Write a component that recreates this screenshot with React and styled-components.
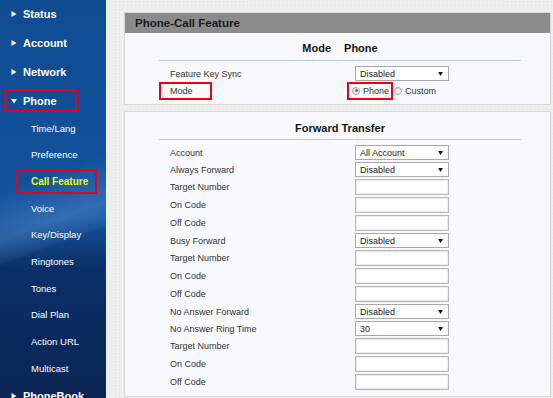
import React from 'react';
import styled, { createGlobalStyle } from 'styled-components';

const GlobalStyle = createGlobalStyle`
    html, body {
        margin: 0;
        padding: 0;
        width: 553px;
        height: 398px;
        overflow: hidden;
        background: #efefef;
        font-family: 'Liberation Sans', Arial, sans-serif;
    }
`;

const menu = [
    { label: 'Status', top: true },
    { label: 'Account', top: true },
    { label: 'Network', top: true },
    { label: 'Phone', top: true, open: true, marked: true },
    { label: 'Time/Lang' },
    { label: 'Preference' },
    { label: 'Call Feature', active: true, marked: true },
    { label: 'Voice' },
    { label: 'Key/Display' },
    { label: 'Ringtones' },
    { label: 'Tones' },
    { label: 'Dial Plan' },
    { label: 'Action URL' },
    { label: 'Multicast' },
    { label: 'PhoneBook', top: true },
];

const forwardRows = [
    { label: 'Account', select: 'All Account' },
    { label: 'Always Forward', select: 'Disabled' },
    { label: 'Target Number' },
    { label: 'On Code' },
    { label: 'Off Code' },
    { label: 'Busy Forward', select: 'Disabled' },
    { label: 'Target Number' },
    { label: 'On Code' },
    { label: 'Off Code' },
    { label: 'No Answer Forward', select: 'Disabled' },
    { label: 'No Answer Ring Time', select: '30' },
    { label: 'Target Number' },
    { label: 'On Code' },
    { label: 'Off Code' },
];

function Arrow({ open }) {
    return (
        <ArrowIcon viewBox="0 0 6 6">
            {open ? <path d="M0 1 L6 1 L3 5.5 Z" /> : <path d="M0.5 0 L5.5 3 L0.5 6 Z" />}
        </ArrowIcon>
    );
}

function Select({ value }) {
    return (
        <SelectBox>
            <span>{value}</span>
            <Caret viewBox="0 0 6 5">
                <path d="M0 0 L6 0 L3 5 Z" />
            </Caret>
        </SelectBox>
    );
}

function App() {
    return (
        <Page>
            <GlobalStyle />
            <Sidebar>
                <Nav>
                    {menu.map((item, i) =>
                        item.top ? (
                            <TopItem key={i}>
                                <TopBox $marked={item.marked}>
                                    <Arrow open={item.open} />
                                    {item.label}
                                </TopBox>
                            </TopItem>
                        ) : (
                            <SubItem key={i}>
                                <SubBox $marked={item.marked} $active={item.active}>
                                    {item.label}
                                </SubBox>
                            </SubItem>
                        )
                    )}
                </Nav>
            </Sidebar>
            <Main>
                <Panel>
                    <PanelHeader>Phone-Call Feature</PanelHeader>
                    <Section>
                        <SectionTitle>
                            <span>Mode</span>
                            <span>Phone</span>
                        </SectionTitle>
                        <Rows>
                            <Row>
                                <Label>Feature Key Sync</Label>
                                <Select value="Disabled" />
                            </Row>
                            <Row>
                                <Label $marked>Mode</Label>
                                <RadioGroup>
                                    <RadioOption $marked>
                                        <Radio $checked />
                                        Phone
                                    </RadioOption>
                                    <RadioOption>
                                        <Radio />
                                        Custom
                                    </RadioOption>
                                </RadioGroup>
                            </Row>
                        </Rows>
                    </Section>
                </Panel>
                <Panel>
                    <Section>
                        <SectionTitle $plain>Forward Transfer</SectionTitle>
                        <Rows>
                            {forwardRows.map((row, i) => (
                                <Row key={i} $tall={!row.select}>
                                    <Label>{row.label}</Label>
                                    {row.select ? <Select value={row.select} /> : <TextInput />}
                                </Row>
                            ))}
                        </Rows>
                    </Section>
                </Panel>
            </Main>
        </Page>
    );
}

const Page = styled.div`
    display: flex;
    width: 553px;
    height: 398px;
    overflow: hidden;
`;

const Sidebar = styled.aside`
    width: 106px;
    flex-shrink: 0;
    border-right: 1px solid #f4f6f9;
    background-color: #0c3a78;
    background-image: linear-gradient(
            160deg,
            rgba(255, 255, 255, 0) 0%,
            rgba(255, 255, 255, 0) 44%,
            rgba(120, 170, 225, 0.3) 55%,
            rgba(120, 170, 225, 0.1) 60%,
            rgba(255, 255, 255, 0) 61%,
            rgba(255, 255, 255, 0) 100%
        ),
        linear-gradient(
            180deg,
            #0f4c92 0%,
            #11519a 35%,
            #13549c 55%,
            #0b3068 67%,
            #0a2a5d 85%,
            #0a2654 100%
        );
    overflow: hidden;
`;

const Nav = styled.ul`
    list-style: none;
    margin: -1px 0 0;
    padding: 0;
`;

const TopItem = styled.li`
    height: 29px;
    display: flex;
    align-items: center;
`;

const TopBox = styled.div`
    display: flex;
    align-items: center;
    gap: 6px;
    box-sizing: border-box;
    height: 23px;
    width: ${(p) => (p.$marked ? '73px' : 'auto')};
    margin-left: 4px;
    padding-left: 5px;
    border: 2px solid ${(p) => (p.$marked ? '#e8001c' : 'transparent')};
    color: #fff;
    font-size: 11px;
    font-weight: bold;
    white-space: nowrap;
`;

const ArrowIcon = styled.svg`
    width: 6px;
    height: 6px;
    fill: #fff;
    flex-shrink: 0;
`;

const SubItem = styled.li`
    height: 26.67px;
    display: flex;
    align-items: center;
`;

const SubBox = styled.div`
    display: flex;
    align-items: center;
    box-sizing: border-box;
    height: 25px;
    width: ${(p) => (p.$marked ? '81px' : 'auto')};
    margin-left: 16px;
    padding-left: 13px;
    border: 2px solid ${(p) => (p.$marked ? '#e8001c' : 'transparent')};
    color: ${(p) => (p.$active ? '#f5f500' : '#fff')};
    font-size: ${(p) => (p.$active ? '10px' : '9.5px')};
    font-weight: ${(p) => (p.$active ? 'bold' : 'normal')};
    white-space: nowrap;
`;

const Main = styled.main`
    flex: 1;
    display: flex;
    flex-direction: column;
    gap: 6px;
    padding: 12px 2px 0 17px;
    min-width: 0;
    background-color: #f0f0f0;
    background-image: repeating-linear-gradient(0deg, rgba(0, 0, 0, 0.015) 0 1px, transparent 1px 4px),
        repeating-linear-gradient(90deg, rgba(0, 0, 0, 0.015) 0 1px, transparent 1px 4px);
`;

const Panel = styled.section`
    flex-shrink: 0;
    border: 1px solid #d9d9d9;
    background: #f8f9fc;
`;

const PanelHeader = styled.h2`
    margin: 0;
    height: 20px;
    line-height: 20px;
    padding-left: 10px;
    background: #8b8b8b;
    color: #1a1a1a;
    font-size: 11.5px;
    font-weight: bold;
`;

const Section = styled.div`
    margin: 0 29px 0 34px;
    padding-bottom: 5px;
`;

const SectionTitle = styled.div`
    display: flex;
    justify-content: center;
    gap: 13px;
    padding: ${(p) => (p.$plain ? '9px 0 4px' : '8px 0 5px')};
    line-height: 14px;
    border-bottom: 1px solid #b7cce8;
    color: #151515;
    font-size: 11px;
    font-weight: bold;
`;

const Rows = styled.div`
    display: flex;
    flex-direction: column;
    margin-top: 4px;
`;

const Row = styled.div`
    display: flex;
    align-items: center;
    height: ${(p) => (p.$tall ? '18px' : '17px')};
`;

const Label = styled.div`
    box-sizing: border-box;
    width: ${(p) => (p.$marked ? '53px' : '196px')};
    margin-right: ${(p) => (p.$marked ? '143px' : '0')};
    height: ${(p) => (p.$marked ? '18px' : 'auto')};
    display: flex;
    align-items: center;
    padding-left: ${(p) => (p.$marked ? '9px' : '11px')};
    border: ${(p) => (p.$marked ? '2px solid #e8001c' : 'none')};
    color: #333;
    font-size: 9px;
    white-space: nowrap;
`;

const SelectBox = styled.div`
    box-sizing: border-box;
    width: 94px;
    height: 15px;
    display: flex;
    align-items: center;
    justify-content: space-between;
    padding: 0 5px 0 4px;
    border: 1px solid #a9a9a9;
    background: #fff;
    color: #222;
    font-size: 9px;
`;

const Caret = styled.svg`
    width: 5px;
    height: 4px;
    fill: #111;
`;

const TextInput = styled.input`
    box-sizing: border-box;
    width: 94px;
    height: 16px;
    margin: 0;
    padding: 0 3px;
    border: 1px solid #b8b8b8;
    box-shadow: inset 0 0 0 1px #ececec;
    background: #fff;
    outline: none;
`;

const RadioGroup = styled.div`
    display: flex;
    align-items: center;
    gap: 1px;
    margin-left: -8px;
`;

const RadioOption = styled.label`
    box-sizing: border-box;
    display: flex;
    align-items: center;
    gap: 3px;
    height: 18px;
    padding: 0 2px 0 ${(p) => (p.$marked ? '3px' : '0')};
    border: ${(p) => (p.$marked ? '2px solid #e8001c' : 'none')};
    color: #333;
    font-size: 9px;
`;

const Radio = styled.span`
    position: relative;
    box-sizing: border-box;
    width: 8px;
    height: 8px;
    border-radius: 50%;
    border: 1px solid #a3a3a3;
    background: linear-gradient(180deg, #e4e4e4, #fbfbfb);

    &::after {
        content: '';
        display: ${(p) => (p.$checked ? 'block' : 'none')};
        position: absolute;
        left: 1.5px;
        top: 1.5px;
        width: 3px;
        height: 3px;
        border-radius: 50%;
        background: #6f6f6f;
    }
`;

export default App;
